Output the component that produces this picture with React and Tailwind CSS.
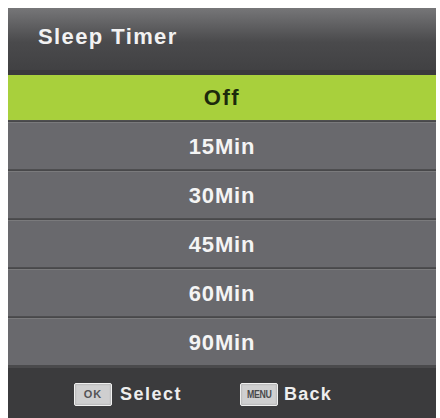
import React from 'react';

const options = ['15Min', '30Min', '45Min', '60Min', '90Min'];

const Separator = () => (
  <div className="flex h-[3px] flex-col">
    <div className="h-px bg-[#4e4e50]" />
    <div className="h-px bg-[#48484a]" />
    <div className="h-px bg-[#7a7a7c]" />
  </div>
);

const KeyBadge = ({ children, narrow }) => (
  <div className="flex h-[23px] w-[38px] items-center justify-center rounded-[2px] border border-[#f0f0f0] bg-[#cfcfd0] shadow-[inset_0_0_2px_rgba(0,0,0,0.3)]">
    <span
      className={
        narrow
          ? 'inline-block scale-x-[0.8] text-[11px] font-bold leading-none tracking-[-0.5px] text-[#4a4a4c]'
          : 'text-[11px] font-bold leading-none tracking-[1px] text-[#555557]'
      }
    >
      {children}
    </span>
  </div>
);

export default function App() {
  return (
    <div
      className="h-[418px] w-[440px] bg-white pl-2 pr-1 pt-2"
      style={{ fontFamily: '"Liberation Sans", Arial, sans-serif' }}
    >
      <div className="flex h-full flex-col bg-[#3c3c3e]">
        {/* Header */}
        <div className="flex h-[62px] items-center bg-[linear-gradient(to_bottom,#767678_0%,#5e5e60_30%,#4a4a4c_55%,#414143_100%)] pb-[6px] pl-[30px]">
          <span className="text-[22px] font-bold tracking-[1.4px] text-[#f2f2f2]">Sleep Timer</span>
        </div>
        <div className="h-[5px] bg-[#3a3a3c]" />

        {/* Selected */}
        <div className="flex h-[45px] items-center justify-center bg-[#a8d03c]">
          <span className="text-[22px] font-bold tracking-[1.5px] text-[#1c2a0c]">Off</span>
        </div>

        {options.map((opt) => (
          <React.Fragment key={opt}>
            <Separator />
            <div className="flex h-[46px] items-center justify-center bg-[#69696d]">
              <span className="text-[22px] font-bold tracking-[0.8px] text-[#f4f4f4]">{opt}</span>
            </div>
          </React.Fragment>
        ))}
        <div className="h-[3px] bg-[#4a4a4c]" />

        {/* Footer */}
        <div className="flex flex-1 items-center bg-[#3b3b3d] pl-[66px] pt-[3px]">
          <KeyBadge>OK</KeyBadge>
          <span className="ml-[8px] text-[18px] font-bold tracking-[1.5px] text-[#eeeeee]">Select</span>
          <div className="ml-[58px]">
            <KeyBadge narrow>MENU</KeyBadge>
          </div>
          <span className="ml-[6px] text-[18px] font-bold tracking-[1.2px] text-[#eeeeee]">Back</span>
        </div>
      </div>
    </div>
  );
}
